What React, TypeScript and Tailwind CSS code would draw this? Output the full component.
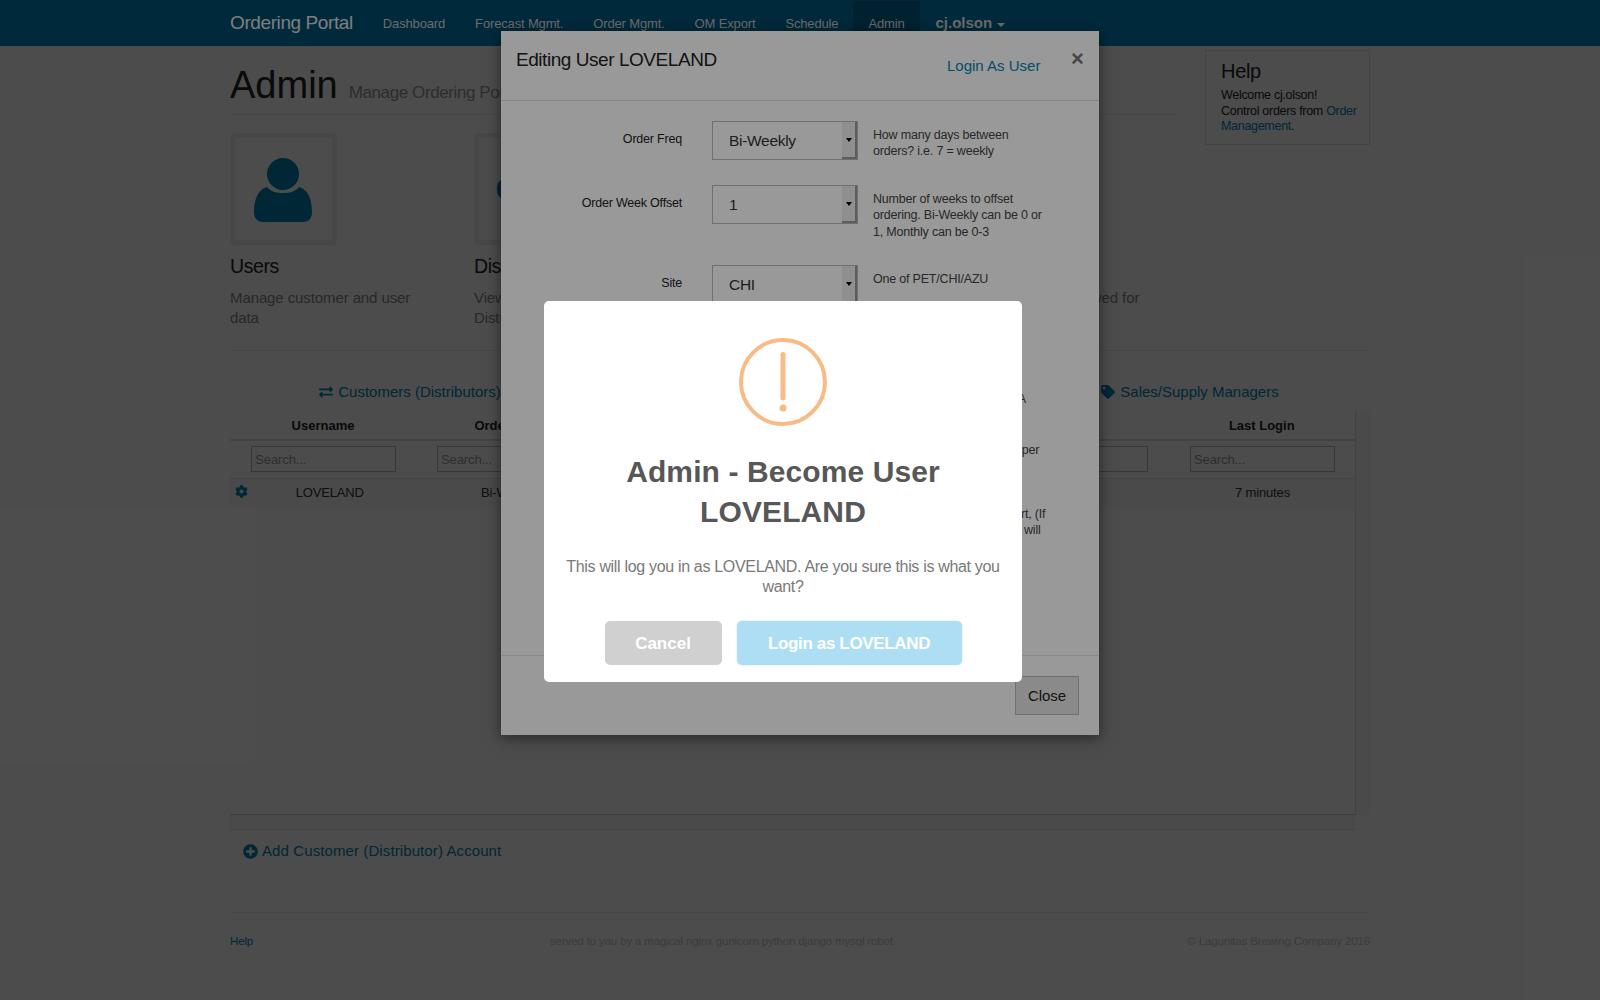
import { FaCog, FaExchangeAlt, FaPlusCircle, FaTag } from "react-icons/fa";

const NAV_ITEMS = ["Dashboard", "Forecast Mgmt.", "Order Mgmt.", "OM Export", "Schedule"];

const CARDS = [
  { title: "Users", desc: "Manage customer and user data", icon: "person" },
  { title: "Distributors", desc: "View and edit all of the Distributor data", icon: "block" },
  { title: "Products", desc: "Manage products", icon: "block" },
  { title: "Order Schedule", desc: "Set all products allowed for ordering", icon: "block" },
];

const COLUMNS = ["Username", "Order Freq", "Week Offset", "Site", "Type", "Last Login"];
const ROW = ["LOVELAND", "Bi-Weekly", "1", "CHI", "", "7 minutes"];

// --- helper lines are split by hand so they wrap like the original ---
const FIELDS = [
  { label: "Order Freq", value: "Bi-Weekly", help: ["How many days between", "orders? i.e. 7 = weekly"], height: "h-[64px]" },
  {
    label: "Order Week Offset",
    value: "1",
    help: ["Number of weeks to offset", "ordering. Bi-Weekly can be 0 or", "1, Monthly can be 0-3"],
    height: "h-[80px]",
  },
  { label: "Site", value: "CHI", help: ["One of PET/CHI/AZU"], height: "h-[120px]" },
  { label: "Pallets", value: "1", help: ["Number of pallets allowed, A"], height: "h-[51px]" },
  { label: "Max Pallets", value: "26", help: ["Maximum number of cases per"], height: "h-[64px]" },
  {
    label: "Report",
    value: "Yes",
    help: ["Included in this weekly report, (If", "enabled this distributor user will"],
    height: "h-[100px]",
  },
];

function PersonIcon({ className }: { className: string }) {
  return (
    <svg className={className} viewBox="0 0 60 65" fill="currentColor">
      <circle cx="30" cy="16" r="16" />
      <path d="M14 29C18 34 24 35 30 35C36 35 42 34 46 29C54 31 59 40 59 54C59 60 56 64 50 64H10C4 64 1 60 1 54C1 40 6 31 14 29Z" />
    </svg>
  );
}

function Caret() {
  return <span className="inline-block h-0 w-0 border-x-[3px] border-t-[4px] border-x-transparent border-t-black" />;
}

function FakeSelect({ value }: { value: string }) {
  return (
    <div className="flex h-[39px] w-[146px] border border-[#bbbbbb]">
      <div className="flex-1 pl-[16px] text-[15.5px] leading-[37px] tracking-[-0.3px] text-[#333333]">{value}</div>
      <div className="flex w-[15px] items-center justify-center border-r-2 border-b-2 border-[#999999] bg-[#eeeeee]">
        <Caret />
      </div>
    </div>
  );
}

function PageContent() {
  return (
    <div className="mx-auto w-[1140px]">
      <div className="flex h-[69px] items-start justify-between">
        <div className="flex h-[69px] w-[946px] items-baseline border-b border-[#eeeeee] pt-[12px]">
          <h1 className="text-[38px] leading-[54px] font-light text-[#222222]">Admin</h1>
          <span className="ml-[11px] text-[17px] tracking-[-0.4px] text-[#999999]">Manage Ordering Portal</span>
        </div>
        <div className="mt-[4px] h-[95px] w-[165px] shrink-0 border border-[#e3e3e3] pt-[8px] pl-[15px] text-[12.5px] leading-[15.5px] tracking-[-0.3px] text-[#222222]">
          <div className="mb-[5px] text-[20px] leading-[24px] tracking-[-0.3px]">Help</div>
          <div>Welcome cj.olson!</div>
          <div>
            Control orders from <span className="text-[#0083b5]">Order Management</span>.
          </div>
        </div>
      </div>

      <div className="mt-[18px] grid grid-cols-[repeat(4,244px)] pb-[22px]">
        {CARDS.map((card) => (
          <div key={card.title}>
            <div className="flex h-[112px] w-[107px] items-center justify-center rounded-[5px] border-[5px] border-[#eeeeee]">
              {card.icon === "person" ? (
                <PersonIcon className="mt-[3px] -ml-[2px] h-[65px] w-[60px] text-[#0083b5]" />
              ) : (
                <div className="h-[20px] w-[62px] rounded-[8px] bg-[#0083b5]" />
              )}
            </div>
            <div className="mt-[9px] text-[19.5px] leading-[24px] tracking-[-0.4px] text-[#222222]">{card.title}</div>
            <div className="mt-[10px] w-[200px] text-[15px] leading-[20px] tracking-[-0.1px] text-[#888888]">{card.desc}</div>
          </div>
        ))}
      </div>

      <div className="border-t border-[#eeeeee] pt-[31px]">
        <div className="mx-auto grid w-[1040px] grid-cols-4 text-center text-[15px] leading-[20px] text-[#0083b5]">
          <div className="flex items-center justify-center gap-[5px]">
            <FaExchangeAlt className="text-[14px]" />
            Customers (Distributors)
          </div>
          <div>Products</div>
          <div>Orders</div>
          <div className="flex items-center justify-center gap-[5px]">
            <FaTag className="text-[14px]" />
            Sales/Supply Managers
          </div>
        </div>

        <div className="mt-[9px] flex">
          <div className="w-[1125px]">
            <div className="h-[404px] border-b border-[#cccccc]">
              <div className="grid h-[30px] grid-cols-[186px_184px_189.75px_189.75px_189px_186.5px] border-b-2 border-[#dddddd] text-center text-[13px] leading-[30px] font-bold text-[#222222]">
                {COLUMNS.map((col) => (
                  <div key={col}>{col}</div>
                ))}
              </div>
              <div className="grid h-[38px] grid-cols-[187.5px_184px_189.75px_189.75px_189px_185px] items-center border-b border-[#dddddd]">
                {COLUMNS.map((col) => (
                  <div key={col} className="-mt-px flex justify-center">
                    <input
                      placeholder="Search..."
                      className="h-[26px] w-[145px] border border-[#bbbbbb] px-[3px] text-[13px] tracking-[-0.1px] placeholder:text-[#999999]"
                    />
                  </div>
                ))}
              </div>
              <div className="grid h-[28px] grid-cols-[187.5px_184px_189.75px_189.75px_189px_185px] items-center bg-[#f8f8f8] text-center text-[13px] tracking-[-0.15px] text-[#333333]">
                {ROW.map((cell, i) =>
                  i === 0 ? (
                    <div key={i} className="flex items-center pl-[5px]">
                      <FaCog className="-mt-[3px] text-[13px] text-[#0083b5]" />
                      <span className="flex-1 pr-[6px]">{cell}</span>
                    </div>
                  ) : (
                    <div key={i}>{cell}</div>
                  ),
                )}
              </div>
            </div>
            <div className="h-[15px] border-b border-[#e5e5e5] bg-[#f8f8f8]" />
          </div>
          <div className="h-[404px] w-[15px] border-l border-[#dddddd] bg-[#f8f8f8]" />
        </div>

        <div className="mt-[11px] flex items-center gap-[4px] pl-[13px] text-[15px] leading-[20px] tracking-[0.1px] text-[#0083b5]">
          <FaPlusCircle className="text-[15px]" />
          Add Customer (Distributor) Account
        </div>

        <div className="mt-[51px] flex border-t border-[#eeeeee] pt-[20px] text-[11.5px] leading-[16px] tracking-[-0.15px]">
          <div className="w-[320px] text-[#0083b5]">Help</div>
          <div className="text-[#c8c8c8]">served to you by a magical nginx gunicorn python django mysql robot</div>
          <div className="flex-1 text-right text-[#c8c8c8]">© Lagunitas Brewing Company 2016</div>
        </div>
      </div>
    </div>
  );
}

function EditModal() {
  return (
    <div className="absolute top-[31px] left-[501px] z-30 flex h-[704px] w-[598px] flex-col bg-white shadow-[0_3px_14px_rgba(0,0,0,0.5)]">
      <div className="relative h-[70px] border-b border-[#dddddd]">
        <div className="absolute top-[15px] left-[15px] text-[19px] leading-[27px] tracking-[-0.45px] text-[#222222]">
          Editing User LOVELAND
        </div>
        <div className="absolute top-[25px] left-[446px] text-[15px] leading-[20px] text-[#0083b5]">Login As User</div>
        <div className="absolute top-[14px] left-[570px] text-[22px] leading-[28px] font-bold text-[#777777]">×</div>
      </div>
      <div className="flex-1 overflow-hidden pt-[20px]">
        {FIELDS.map((field) => (
          <div key={field.label} className={`flex items-start ${field.height}`}>
            <div className="mt-[9px] w-[181px] text-right text-[12.5px] leading-[18px] tracking-[-0.2px] text-[#222222]">
              {field.label}
            </div>
            <div className="ml-[30px]">
              <FakeSelect value={field.value} />
            </div>
            <div className="ml-[15px] pt-[5.5px] text-[12.5px] leading-[16.5px] tracking-[-0.2px] whitespace-nowrap text-[#444444]">
              {field.help.map((line) => (
                <div key={line}>{line}</div>
              ))}
            </div>
          </div>
        ))}
      </div>
      <div className="flex h-[80px] items-start justify-end border-t border-[#e5e5e5] pt-[20px] pr-[20px]">
        <div className="flex h-[39px] w-[64px] items-center justify-center border border-[#bbbbbb] bg-[#e6e6e6] pt-px text-[15px] tracking-[-0.1px] text-[#222222]">
          Close
        </div>
      </div>
    </div>
  );
}

function ConfirmAlert() {
  return (
    <div className="absolute top-[301px] left-[544px] z-50 flex h-[381px] w-[478px] flex-col items-center rounded-[5px] bg-white pt-[37px]">
      <div className="relative h-[88px] w-[88px] rounded-full border-4 border-[#f8bb86]">
        <svg className="h-[80px] w-[80px]" viewBox="0 0 80 80">
          <line x1="40" y1="12.5" x2="40" y2="56" stroke="#f8bb86" strokeWidth="5" strokeLinecap="round" />
          <circle cx="40" cy="66" r="3.5" fill="#f8bb86" />
        </svg>
      </div>
      <div className="mt-[26px] w-[400px] text-center text-[30px] leading-[40px] font-bold tracking-[0.1px] text-[#575757]">
        Admin - Become User LOVELAND
      </div>
      <div className="mt-[25px] w-[450px] text-center text-[16px] leading-[19.5px] tracking-[-0.32px] text-[#797979]">
        This will log you in as LOVELAND. Are you sure this is what you want?
      </div>
      <div className="mt-[25px] flex gap-[15px]">
        <div className="flex h-[44px] w-[117px] items-center justify-center rounded-[5px] bg-[#d0d0d0] pt-px text-[17px] font-bold text-white">
          Cancel
        </div>
        <div className="flex h-[44px] w-[225px] items-center justify-center rounded-[5px] bg-[#aedef4] pt-px text-[17px] font-bold tracking-[-0.35px] text-white shadow-[0_0_2px_rgba(174,222,244,0.8)]">
          Login as LOVELAND
        </div>
      </div>
    </div>
  );
}

export default function App() {
  return (
    <div className="relative h-[1000px] overflow-hidden bg-white font-['Liberation_Sans',Arial,sans-serif]">
      {/* Navbar sits above the backdrop, only the alert overlay dims it */}
      <div className="relative z-20 h-[46px] bg-[#004664]">
        <div className="mx-auto flex h-full w-[1140px] items-center pt-px">
          <div className="mr-[15px] text-[19px] tracking-[-0.4px] text-[#d2d2d2]">Ordering Portal</div>
          {NAV_ITEMS.map((item) => (
            <div key={item} className="flex h-full items-center px-[15px] text-[13px] tracking-[-0.15px] text-[#b4b4b4]">
              {item}
            </div>
          ))}
          <div className="flex h-full items-center bg-[#003850] px-[15px] text-[13px] tracking-[-0.15px] text-[#b4b4b4]">
            Admin
          </div>
          <div className="flex items-center gap-[5px] pl-[16px] text-[15px] font-bold text-[#b4b4b4]">
            cj.olson
            <span className="mt-[2px] h-0 w-0 border-x-[4px] border-t-[4px] border-x-transparent border-t-[#b4b4b4]" />
          </div>
        </div>
      </div>

      <PageContent />

      <div className="absolute inset-0 z-10 bg-black/50" />
      <EditModal />
      <div className="absolute inset-0 z-40 bg-black/40" />
      <ConfirmAlert />
    </div>
  );
}
